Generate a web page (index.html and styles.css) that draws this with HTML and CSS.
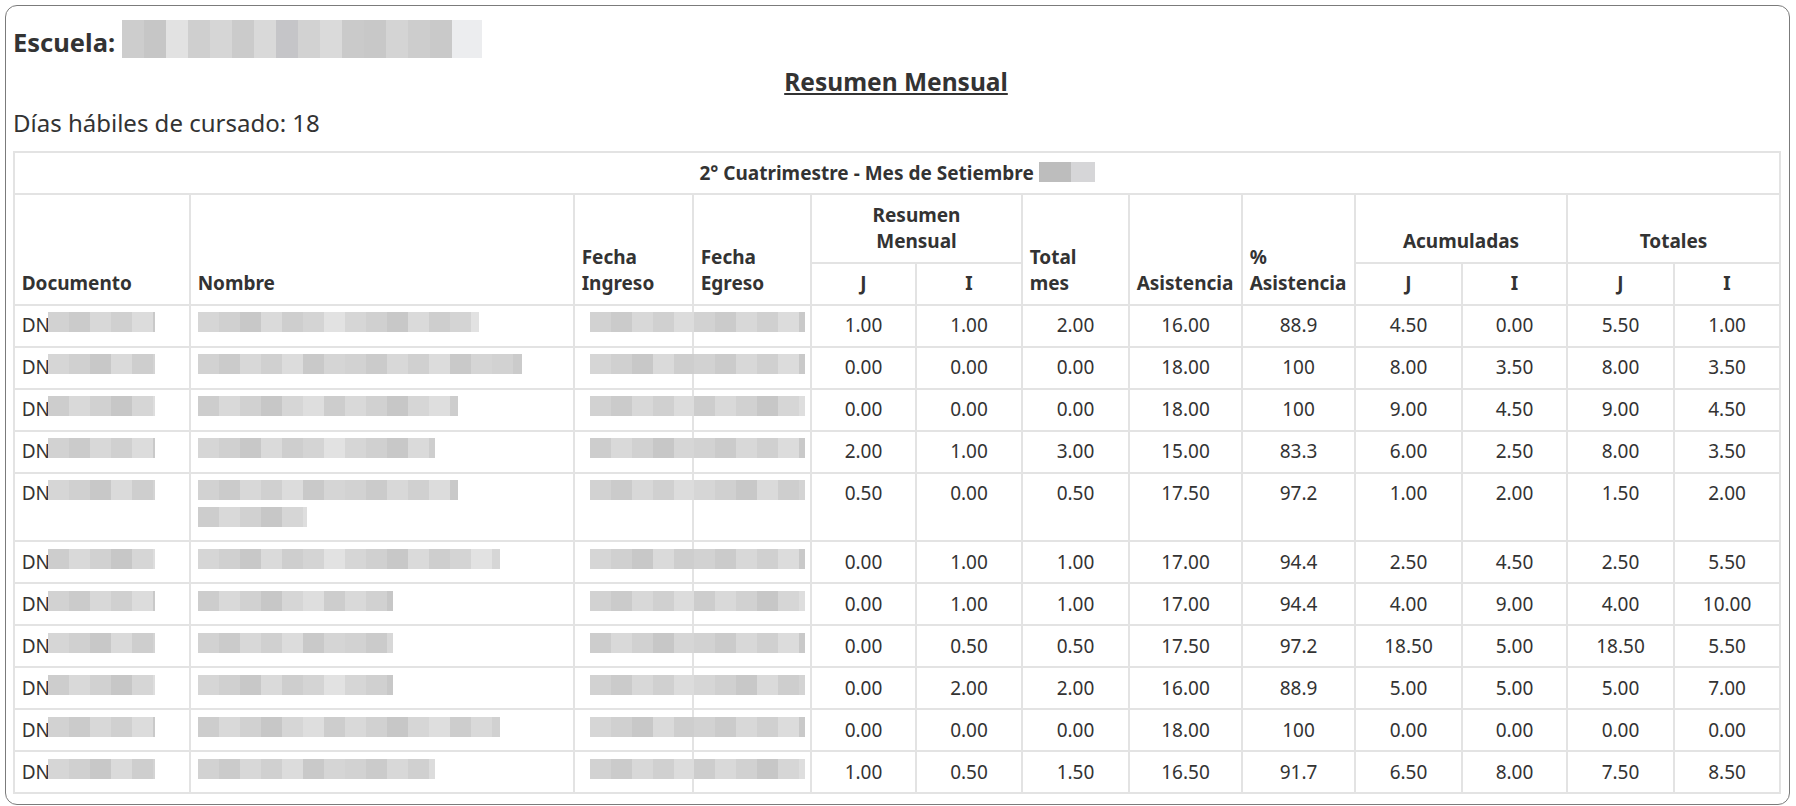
FILE: index.html
```html
<!DOCTYPE html>
<html lang="es">
<head>
<meta charset="utf-8">
<title>Resumen Mensual</title>
<link rel="stylesheet" href="styles.css">
</head>
<body>
<div class="panel">
  <div class="school">
    <span class="school-label">Escuela:</span>
    <span class="redact big" style="width:360px"></span>
  </div>
  <h2 class="title">Resumen Mensual</h2>
  <p class="days">Días hábiles de cursado: 18</p>
  <table class="report">
    <colgroup>
      <col class="w-doc"><col class="w-name"><col class="w-date"><col class="w-date2">
      <col class="w-j"><col class="w-i"><col class="w-tot"><col class="w-as"><col class="w-pas">
      <col class="w-aj"><col class="w-ai"><col class="w-tj"><col class="w-ti">
    </colgroup>
    <thead>
      <tr><th colspan="13" class="caption">2° Cuatrimestre - Mes de Setiembre <span class="redact year"></span></th></tr>
      <tr>
        <th rowspan="2">Documento</th>
        <th rowspan="2">Nombre</th>
        <th rowspan="2">Fecha<br>Ingreso</th>
        <th rowspan="2">Fecha<br>Egreso</th>
        <th colspan="2" class="c">Resumen<br>Mensual</th>
        <th rowspan="2">Total<br>mes</th>
        <th rowspan="2">Asistencia</th>
        <th rowspan="2">%<br>Asistencia</th>
        <th colspan="2" class="c">Acumuladas</th>
        <th colspan="2" class="c">Totales</th>
      </tr>
      <tr>
        <th class="c">J</th><th class="c">I</th>
        <th class="c">J</th><th class="c">I</th>
        <th class="c">J</th><th class="c">I</th>
      </tr>
    </thead>
    <tbody>
      <tr><td>DN<span class="redact doc"></span></td><td><span class="redact t2" style="width:281px"></span></td><td><span class="redact fi"></span></td><td><span class="redact fe"></span></td><td class="n">1.00</td><td class="n">1.00</td><td class="n">2.00</td><td class="n">16.00</td><td class="n">88.9</td><td class="n">4.50</td><td class="n">0.00</td><td class="n">5.50</td><td class="n">1.00</td></tr>
      <tr><td>DN<span class="redact doc t2"></span></td><td><span class="redact t1" style="width:324px"></span></td><td><span class="redact fi t2"></span></td><td><span class="redact fe"></span></td><td class="n">0.00</td><td class="n">0.00</td><td class="n">0.00</td><td class="n">18.00</td><td class="n">100</td><td class="n">8.00</td><td class="n">3.50</td><td class="n">8.00</td><td class="n">3.50</td></tr>
      <tr><td>DN<span class="redact doc t3"></span></td><td><span class="redact t3" style="width:260px"></span></td><td><span class="redact fi"></span></td><td><span class="redact fe t3"></span></td><td class="n">0.00</td><td class="n">0.00</td><td class="n">0.00</td><td class="n">18.00</td><td class="n">100</td><td class="n">9.00</td><td class="n">4.50</td><td class="n">9.00</td><td class="n">4.50</td></tr>
      <tr><td>DN<span class="redact doc"></span></td><td><span class="redact t2" style="width:237px"></span></td><td><span class="redact fi t3"></span></td><td><span class="redact fe"></span></td><td class="n">2.00</td><td class="n">1.00</td><td class="n">3.00</td><td class="n">15.00</td><td class="n">83.3</td><td class="n">6.00</td><td class="n">2.50</td><td class="n">8.00</td><td class="n">3.50</td></tr>
      <tr><td>DN<span class="redact doc t2"></span></td><td><span class="redact t1" style="width:260px"></span><br><span class="redact t3" style="width:109px"></span></td><td><span class="redact fi"></span></td><td><span class="redact fe t2"></span></td><td class="n">0.50</td><td class="n">0.00</td><td class="n">0.50</td><td class="n">17.50</td><td class="n">97.2</td><td class="n">1.00</td><td class="n">2.00</td><td class="n">1.50</td><td class="n">2.00</td></tr>
      <tr><td>DN<span class="redact doc t3"></span></td><td><span class="redact t2" style="width:302px"></span></td><td><span class="redact fi t2"></span></td><td><span class="redact fe"></span></td><td class="n">0.00</td><td class="n">1.00</td><td class="n">1.00</td><td class="n">17.00</td><td class="n">94.4</td><td class="n">2.50</td><td class="n">4.50</td><td class="n">2.50</td><td class="n">5.50</td></tr>
      <tr><td>DN<span class="redact doc"></span></td><td><span class="redact t3" style="width:195px"></span></td><td><span class="redact fi"></span></td><td><span class="redact fe t3"></span></td><td class="n">0.00</td><td class="n">1.00</td><td class="n">1.00</td><td class="n">17.00</td><td class="n">94.4</td><td class="n">4.00</td><td class="n">9.00</td><td class="n">4.00</td><td class="n">10.00</td></tr>
      <tr><td>DN<span class="redact doc t2"></span></td><td><span class="redact t1" style="width:195px"></span></td><td><span class="redact fi t3"></span></td><td><span class="redact fe"></span></td><td class="n">0.00</td><td class="n">0.50</td><td class="n">0.50</td><td class="n">17.50</td><td class="n">97.2</td><td class="n">18.50</td><td class="n">5.00</td><td class="n">18.50</td><td class="n">5.50</td></tr>
      <tr><td>DN<span class="redact doc t3"></span></td><td><span class="redact t2" style="width:195px"></span></td><td><span class="redact fi"></span></td><td><span class="redact fe t2"></span></td><td class="n">0.00</td><td class="n">2.00</td><td class="n">2.00</td><td class="n">16.00</td><td class="n">88.9</td><td class="n">5.00</td><td class="n">5.00</td><td class="n">5.00</td><td class="n">7.00</td></tr>
      <tr><td>DN<span class="redact doc"></span></td><td><span class="redact t3" style="width:302px"></span></td><td><span class="redact fi t2"></span></td><td><span class="redact fe"></span></td><td class="n">0.00</td><td class="n">0.00</td><td class="n">0.00</td><td class="n">18.00</td><td class="n">100</td><td class="n">0.00</td><td class="n">0.00</td><td class="n">0.00</td><td class="n">0.00</td></tr>
      <tr><td>DN<span class="redact doc t2"></span></td><td><span class="redact t1" style="width:237px"></span></td><td><span class="redact fi"></span></td><td><span class="redact fe t3"></span></td><td class="n">1.00</td><td class="n">0.50</td><td class="n">1.50</td><td class="n">16.50</td><td class="n">91.7</td><td class="n">6.50</td><td class="n">8.00</td><td class="n">7.50</td><td class="n">8.50</td></tr>
    </tbody>
  </table>
</div>
</body>
</html>
```
FILE: styles.css
```css
html, body {
  margin: 0;
  background: #ffffff;
}
body {
  font-family: "Noto Sans", "Open Sans", sans-serif;
  color: #333333;
}
.panel {
  margin: 5px 6px 4px 5px;
  border: 1px solid #7b7b7b;
  border-radius: 12px;
  padding: 14px 10px 10px 7px;
}
.school {
  display: flex;
  align-items: flex-end;
  gap: 7px;
  height: 38px;
}
.school-label {
  font-size: 25.5px;
  font-weight: 700;
  line-height: 32px;
}
.title {
  margin: 8px 0 0;
  text-align: center;
  font-size: 24.5px;
  font-weight: 700;
  line-height: 32px;
  text-decoration: underline;
}
.days {
  margin: 9px 0 0;
  font-size: 24px;
  line-height: 32px;
}
.report {
  margin-top: 12px;
  border-collapse: collapse;
  table-layout: fixed;
  width: 1766px;
  font-size: 19px;
  line-height: 26.67px;
}
.report th,
.report td {
  border: 2px solid #e3e3e3;
  padding: 6.67px;
}
.report th {
  font-weight: 700;
  text-align: left;
  vertical-align: bottom;
}
.report th.c,
.report th.caption {
  text-align: center;
}
.report td {
  vertical-align: top;
  white-space: nowrap;
}
.report td.n {
  text-align: center;
}
.w-doc { width: 176px; }
.w-name { width: 384px; }
.w-date { width: 119px; }
.w-date2 { width: 118px; }
.w-j { width: 105px; }
.w-i { width: 106px; }
.w-tot { width: 107px; }
.w-as { width: 113px; }
.w-pas { width: 113px; }
.w-aj { width: 107px; }
.w-ai { width: 105px; }
.w-tj { width: 107px; }
.w-ti { width: 106px; }

.redact {
  display: inline-block;
  height: 20px;
  vertical-align: baseline;
  background: repeating-linear-gradient(90deg,
    #d2d2d2 0 21px, #cbcbcb 21px 42px, #d8d8d8 42px 63px,
    #d0d0d0 63px 84px, #dcdcdc 84px 105px, #c9c9c9 105px 126px,
    #d5d5d5 126px 147px);
}
.redact.t2 {
  background: repeating-linear-gradient(90deg,
    #d6d6d6 0 21px, #d0d0d0 21px 42px, #c8c8c8 42px 63px,
    #dadada 63px 84px, #cecece 84px 105px, #d4d4d4 105px 126px,
    #e2e2e2 126px 147px);
}
.redact.t3 {
  background: repeating-linear-gradient(90deg,
    #cdcdcd 0 21px, #d9d9d9 21px 42px, #d1d1d1 42px 63px,
    #c7c7c7 63px 84px, #d6d6d6 84px 105px, #dedede 105px 126px);
}
.redact.big {
  height: 38px;
  vertical-align: bottom;
  background: repeating-linear-gradient(90deg,
    #cdcdcd 0 22px, #c6c6c6 22px 44px, #e2e2e2 44px 66px,
    #cfcfcf 66px 88px, #d6d6d6 88px 110px, #cbcbcb 110px 132px,
    #d9d9d9 132px 154px, #c5c5c8 154px 176px, #d2d2d2 176px 198px,
    #dadada 198px 220px, #cacaca 220px 242px, #c8c8c8 242px 264px,
    #d4d4d4 264px 286px, #cdcdcd 286px 308px, #c9c9c9 308px 330px,
    #ecedef 330px 360px);
}
.redact.year {
  width: 56px;
  height: 20px;
  vertical-align: -2px;
  background: linear-gradient(90deg, #bdbdbd 0 32px, #d6d6d8 32px 56px);
}
.redact.doc {
  width: 107px;
  margin-left: -2px;
}
.redact.fi {
  width: 104px;
  margin-left: 8px;
}
.redact.fe {
  width: 111px;
  margin-left: -7px;
}
```
